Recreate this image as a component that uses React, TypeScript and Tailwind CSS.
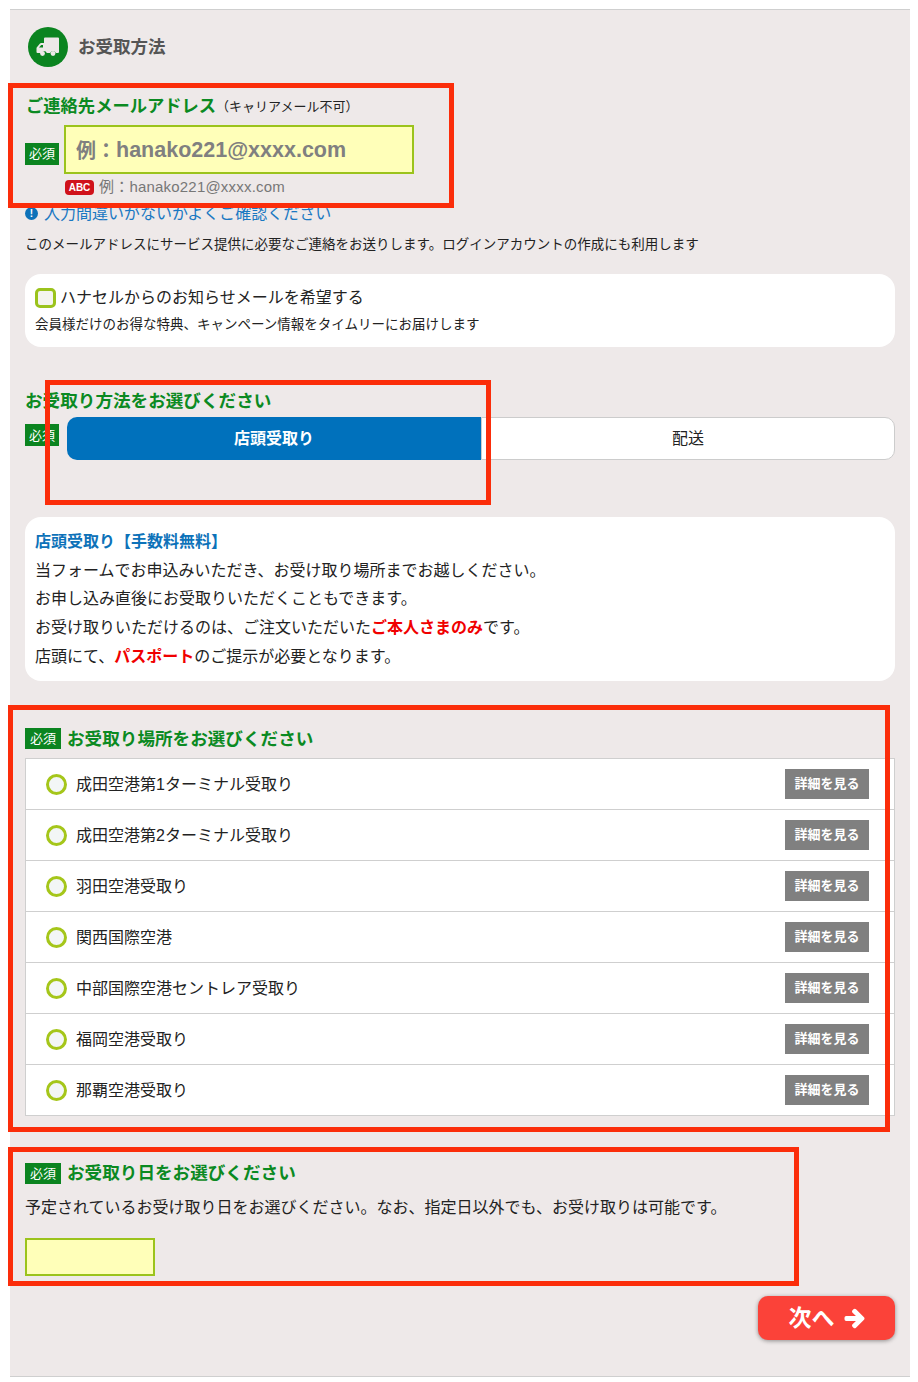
import { FaArrowRight } from 'react-icons/fa';

const PLACES = [
  '成田空港第1ターミナル受取り',
  '成田空港第2ターミナル受取り',
  '羽田空港受取り',
  '関西国際空港',
  '中部国際空港セントレア受取り',
  '福岡空港受取り',
  '那覇空港受取り',
];

function Required({ className }: { className: string }) {
  return (
    <span className={`flex shrink-0 items-center justify-center bg-[#0b8420] text-[13px] leading-none text-white ${className}`}>
      必須
    </span>
  );
}

function Truck() {
  return (
    <svg viewBox="0 0 24 20" className="h-[20px] w-[24px]" fill="#ede8e8">
      <path d="M8 1.5a1 1 0 0 1 1-1h13a1 1 0 0 1 1 1V15a1 1 0 0 1-1 1h-2.2a3 3 0 0 0-5.6 0h-3.4a3 3 0 0 0-5.6 0H1.5a1 1 0 0 1-1-1v-3.8c0-.4.1-.7.4-1L4 6.6C4.300 6.200 4.700 6 5.200 6H8Z" />
      <circle cx="6.500" cy="16.500" r="2.400" />
      <circle cx="17" cy="16.500" r="2.400" />
      <path d="M3 10.500 5.200 8H7v2.500Z" fill="#0b8420" />
    </svg>
  );
}

function RedFrame({ className }: { className: string }) {
  return <div className={`pointer-events-none absolute border-[5px] border-[#fb2d0a] ${className}`} />;
}

export default function App() {
  return (
    <div className="relative h-[1382px] w-[918px] overflow-hidden bg-white pt-[9px] font-['Liberation_Sans','Noto_Sans_CJK_JP',sans-serif] text-[#222]">
      <div className="mx-[10px] h-[1368px] w-[900px] border-y border-[#cfcfcf] bg-[#eee9e9] pr-[15px] pl-[15px]">
        {/* Header */}
        <div className="ml-[3px] flex items-center gap-[10px] pt-[17px]">
          <div className="flex h-[40px] w-[40px] items-center justify-center rounded-full bg-[#0b8420]">
            <Truck />
          </div>
          <h1 className="pt-[2px] text-[17.500px] leading-none font-bold text-[#555]">お受取方法</h1>
        </div>

        {/* Email */}
        <div className="mt-[28px] flex h-[22px] items-center">
          <h2 className="ml-px pt-[2px] text-[17.300px] leading-none font-bold text-[#0b8a22]">ご連絡先メールアドレス</h2>
          <span className="text-[13px] leading-none">（キャリアメール不可）</span>
        </div>
        <div className="mt-[8px] flex items-center">
          <Required className="mt-[8px] h-[22px] w-[34px]" />
          <div className="ml-[5px] flex h-[49px] w-[350px] items-center border-2 border-[#9bc31c] bg-[#ffffb9] pt-[2px] pl-[10px] text-[21.500px] font-bold text-[#808080]">
            <span className="text-[20px]">例：</span>hanako221@xxxx.com
          </div>
        </div>
        <div className="mt-[6px] ml-[40px] flex items-center gap-[5px]">
          <span className="flex h-[15px] w-[29px] items-center justify-center rounded-[4px] bg-[#d0121b] text-[10px] leading-none font-bold text-white">
            ABC
          </span>
          <span className="mt-[-2px] text-[15px] leading-[17px] tracking-[0.2px] text-[#777]">例：hanako221@xxxx.com</span>
        </div>
        <p className="mt-[10px] flex h-[17px] items-center gap-[6px] text-[16px] leading-none text-[#1a78c2]">
          <span className="flex h-[13px] w-[13px] items-center justify-center rounded-full bg-[#0d72b9] text-[10px] leading-none font-bold text-white">!</span>
          入力間違いがないかよくご確認ください
        </p>
        <p className="mt-[13px] mb-[19px] text-[13.500px] leading-[20px]">
          このメールアドレスにサービス提供に必要なご連絡をお送りします。ログインアカウントの作成にも利用します
        </p>

        {/* Newsletter */}
        <div className="h-[73px] w-[870px] rounded-[16px] bg-white pt-[14px] pl-[10px]">
          <div className="flex items-center gap-[4px]">
            <span className="h-[20px] w-[21px] rounded-[5px] border-[3px] border-[#9bc31c] bg-[#f4f4ee]" />
            <span className="text-[16px] leading-[20px]">ハナセルからのお知らせメールを希望する</span>
          </div>
          <p className="mt-[8px] text-[13.500px] leading-[18px]">会員様だけのお得な特典、キャンペーン情報をタイムリーにお届けします</p>
        </div>

        {/* Method */}
        <h2 className="mt-[43px] text-[17.600px] leading-[22px] font-bold text-[#0b8a22]">お受取り方法をお選びください</h2>
        <div className="mt-[5px] flex items-start">
          <Required className="mt-[7px] h-[22px] w-[34px]" />
          <div className="ml-[8px] flex h-[43px] w-[828px] text-[16px] leading-none">
            <div className="flex w-[414px] items-center justify-center rounded-l-[10px] bg-[#0071bc] font-bold text-white">店頭受取り</div>
            <div className="flex flex-1 items-center justify-center rounded-r-[10px] border border-[#ccc] bg-white">配送</div>
          </div>
        </div>

        {/* Shop info */}
        <div className="mt-[57px] h-[164px] w-[870px] rounded-[16px] bg-white pt-[11px] pl-[10px] text-[16px] leading-[28.700px]">
          <h3 className="font-bold text-[#0d72b9]">店頭受取り【手数料無料】</h3>
          <p>当フォームでお申込みいただき、お受け取り場所までお越しください。</p>
          <p>お申し込み直後にお受取りいただくこともできます。</p>
          <p>
            お受け取りいただけるのは、ご注文いただいた<b className="text-[#f00000]">ご本人さまのみ</b>です。
          </p>
          <p>
            店頭にて、<b className="text-[#f00000]">パスポート</b>のご提示が必要となります。
          </p>
        </div>

        {/* Places */}
        <div className="mt-[47px] flex h-[21px] items-center gap-[6px]">
          <Required className="h-[21px] w-[36px]" />
          <h2 className="pt-[2px] text-[17.600px] leading-none font-bold text-[#0b8a22]">お受取り場所をお選びください</h2>
        </div>
        <ul className="mt-[9px] w-[870px] border border-[#cfcfcf] bg-white">
          {PLACES.map((place, i) => (
            <li key={place} className={`flex items-center pr-[25px] pl-[20px] ${i > 0 ? 'h-[51px] border-t border-[#cfcfcf]' : 'h-[50px]'}`}>
              <span className="h-[21px] w-[21px] rounded-full border-[3px] border-[#a5c61a] bg-[#f3f6f6]" />
              <span className="ml-[9px] flex-1 pt-[2px] text-[16px] leading-none">{place}</span>
              <span className="flex h-[30px] w-[84px] items-center justify-center bg-[#808080] pb-[2px] text-[13px] leading-none font-bold text-white">詳細を見る</span>
            </li>
          ))}
        </ul>

        {/* Date */}
        <div className="mt-[47px] flex h-[21px] items-center gap-[6px]">
          <Required className="h-[21px] w-[36px]" />
          <h2 className="text-[17.600px] leading-none font-bold text-[#0b8a22]">お受取り日をお選びください</h2>
        </div>
        <p className="mt-[13px] text-[16px] leading-[22px]">
          予定されているお受け取り日をお選びください。なお、指定日以外でも、お受け取りは可能です。
        </p>
        <div className="mt-[19px] h-[38px] w-[130px] border-2 border-[#9bc31c] bg-[#ffffb9]" />
        <div className="mt-[20px] flex justify-end">
          <button className="flex h-[44px] w-[137px] items-center justify-center gap-[9px] rounded-[10px] bg-[#fb4239] text-[23px] leading-none font-bold text-white shadow-[0_1px_4px_rgba(0,0,0,0.4)]">
            次へ
            <FaArrowRight className="h-[21px] w-[21px]" stroke="currentColor" strokeWidth={40} />
          </button>
        </div>
      </div>

      {/* Red annotation frames */}
      <RedFrame className="top-[83px] left-[8px] h-[125px] w-[446px]" />
      <RedFrame className="top-[380px] left-[45px] h-[125px] w-[446px]" />
      <RedFrame className="top-[705px] left-[8px] h-[427px] w-[882px]" />
      <RedFrame className="top-[1147px] left-[8px] h-[139px] w-[791px]" />
    </div>
  );
}
